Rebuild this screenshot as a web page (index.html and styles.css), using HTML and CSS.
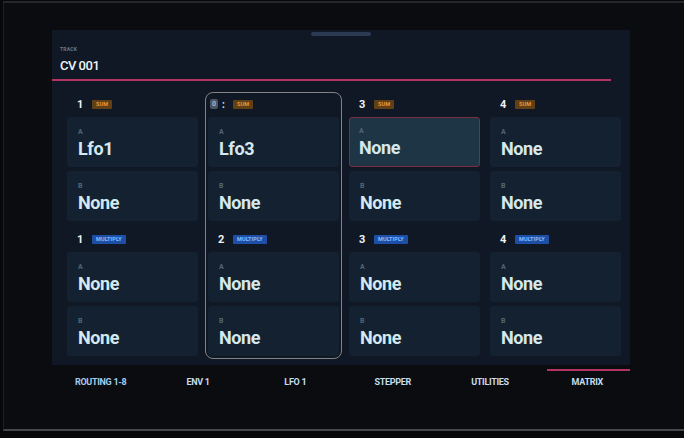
FILE: index.html
```html
<!DOCTYPE html>
<html>
<head>
<meta charset="utf-8">
<link rel="stylesheet" href="styles.css">
</head>
<body>
<div class="device">
  <div class="screen">
    <div class="panel">
      <div class="handle"></div>
      <div class="track">
        <div class="track-label">TRACK</div>
        <div class="track-name">CV 001</div>
      </div>
      <div class="rule"></div>
      <div class="grid">
        <div class="col">
          <div class="head"><span class="num">1</span><span class="badge sum">SUM</span></div>
          <div class="card"><div class="lbl">A</div><div class="val">Lfo1</div></div>
          <div class="card"><div class="lbl">B</div><div class="val">None</div></div>
          <div class="head head2"><span class="num">1</span><span class="badge mul">MULTIPLY</span></div>
          <div class="card"><div class="lbl">A</div><div class="val">None</div></div>
          <div class="card"><div class="lbl">B</div><div class="val">None</div></div>
        </div>
        <div class="col col-active">
          <div class="head"><span class="marker">0</span><span class="colon">:</span><span class="badge sum">SUM</span></div>
          <div class="card"><div class="lbl">A</div><div class="val">Lfo3</div></div>
          <div class="card"><div class="lbl">B</div><div class="val">None</div></div>
          <div class="head head2"><span class="num">2</span><span class="badge mul">MULTIPLY</span></div>
          <div class="card"><div class="lbl">A</div><div class="val">None</div></div>
          <div class="card"><div class="lbl">B</div><div class="val">None</div></div>
        </div>
        <div class="col">
          <div class="head"><span class="num">3</span><span class="badge sum">SUM</span></div>
          <div class="card card-sel"><div class="lbl">A</div><div class="val">None</div></div>
          <div class="card"><div class="lbl">B</div><div class="val">None</div></div>
          <div class="head head2"><span class="num">3</span><span class="badge mul">MULTIPLY</span></div>
          <div class="card"><div class="lbl">A</div><div class="val">None</div></div>
          <div class="card"><div class="lbl">B</div><div class="val">None</div></div>
        </div>
        <div class="col">
          <div class="head"><span class="num">4</span><span class="badge sum">SUM</span></div>
          <div class="card"><div class="lbl">A</div><div class="val">None</div></div>
          <div class="card"><div class="lbl">B</div><div class="val">None</div></div>
          <div class="head head2"><span class="num">4</span><span class="badge mul">MULTIPLY</span></div>
          <div class="card"><div class="lbl">A</div><div class="val">None</div></div>
          <div class="card"><div class="lbl">B</div><div class="val">None</div></div>
        </div>
      </div>
    </div>
    <nav class="tabs">
      <div class="tab"><span class="tab-line"></span><span class="tab-text tab-blue">ROUTING 1-8</span></div>
      <div class="tab"><span class="tab-line"></span><span class="tab-text">ENV 1</span></div>
      <div class="tab"><span class="tab-line"></span><span class="tab-text">LFO 1</span></div>
      <div class="tab"><span class="tab-line"></span><span class="tab-text">STEPPER</span></div>
      <div class="tab"><span class="tab-line"></span><span class="tab-text">UTILITIES</span></div>
      <div class="tab tab-active"><span class="tab-line"></span><span class="tab-text">MATRIX</span></div>
    </nav>
  </div>
</div>
</body>
</html>
```

FILE: styles.css
```css
* { box-sizing: border-box; }
html, body { margin: 0; padding: 0; }
body {
  width: 684px;
  height: 438px;
  overflow: hidden;
  background: #08080a;
  font-family: Roboto, "Noto Sans", "Liberation Sans", sans-serif;
}
.device {
  width: 684px;
  height: 438px;
  padding-top: 1px;
  background: #08080a;
}
.screen {
  margin-left: 3px;
  height: 430px;
  background: #0b0c10;
  border-top: 2px solid #26272b;
  border-left: 1px solid #1f2024;
  border-bottom: 2px solid #46474b;
}
.panel {
  margin-left: 48px;
  margin-top: 27px;
  width: 578px;
  height: 335px;
  background: #0f1824;
  display: flex;
  flex-direction: column;
}
.handle {
  margin: 2px auto 0;
  width: 60px;
  height: 4px;
  border-radius: 2px;
  background: #2b3a52;
}
.track {
  padding-left: 8px;
  margin-top: 10px;
}
.track-label {
  font-size: 5px;
  line-height: 6px;
  color: #6d7886;
  font-weight: 700;
  letter-spacing: 0.2px;
}
.track-name {
  margin-top: 6px;
  font-size: 13px;
  line-height: 16px;
  font-weight: 500;
  color: #f0f5f8;
  letter-spacing: -0.5px;
}
.rule {
  margin-top: 5px;
  width: 559px;
  height: 2px;
  background: #b3345e;
}
.grid {
  margin-top: 14px;
  padding-left: 15px;
  display: grid;
  grid-template-columns: repeat(4, 131px);
  column-gap: 10px;
}
.col {
  display: flex;
  flex-direction: column;
}
.col-active {
  outline: 1px solid #85837f;
  outline-offset: 2px;
  border-radius: 5px;
}
.head {
  height: 18px;
  display: flex;
  align-items: center;
  padding-left: 10px;
}
.head2 { margin-top: 9px; }
.num {
  width: 15px;
  font-size: 11px;
  font-weight: 700;
  color: #eef3f6;
}
.marker {
  margin-left: -8px;
  width: 8px;
  height: 10px;
  border-radius: 2px;
  background: #4b5566;
  color: #aab4c0;
  font-size: 7px;
  font-weight: 700;
  line-height: 10px;
  text-align: center;
}
.colon {
  width: 15px;
  padding-left: 4px;
  font-size: 10px;
  font-weight: 700;
  color: #dfe6ec;
}
.badge {
  height: 9px;
  border-radius: 1px;
  font-size: 5.5px;
  line-height: 9px;
  font-weight: 700;
  letter-spacing: 0.1px;
}
.sum {
  background: #624015;
  color: #e8973a;
  padding: 0 4px;
}
.mul {
  background: #1d4fa6;
  color: #86bcff;
  padding: 0 4px;
}
.card {
  margin-top: 4px;
  height: 50px;
  padding: 10px 10px 0;
  background: #132130;
  border-radius: 3px;
  border: 1px solid transparent;
}
.card-sel {
  background: #1e3546;
  border-color: #7c2d40;
  padding-left: 9px;
  padding-top: 9px;
}
.lbl {
  font-size: 7px;
  line-height: 8px;
  font-weight: 700;
  color: #566576;
}
.val {
  margin-top: 3px;
  font-size: 18px;
  line-height: 20px;
  font-weight: 700;
  color: #d4e8ee;
  letter-spacing: -0.4px;
}
.tabs {
  margin-left: 48px;
  margin-top: 4px;
  width: 584px;
  display: grid;
  grid-template-columns: repeat(6, 1fr);
}
.tab {
  display: flex;
  flex-direction: column;
  align-items: center;
}
.tab-line {
  align-self: stretch;
  height: 2px;
  margin: 0 6px 0 8px;
}
.tab-active .tab-line { background: #b3345e; }
.tab-text {
  margin-top: 6px;
  font-size: 9px;
  line-height: 11px;
  font-weight: 700;
  color: #c4dcee;
  letter-spacing: -0.3px;
}
.tab-blue { color: #a6cdec; }
```
